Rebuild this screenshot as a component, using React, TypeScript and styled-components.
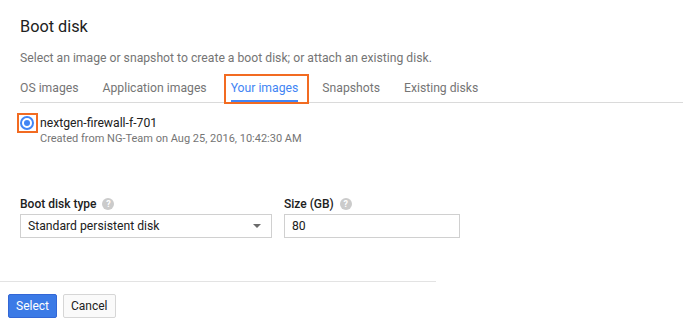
import React from 'react';
import styled, { createGlobalStyle } from 'styled-components';

const GlobalStyle = createGlobalStyle`
  html, body {
    margin: 0;
    padding: 0;
    background: #ffffff;
    font-family: Roboto, "Liberation Sans", Arial, sans-serif;
    color: #212121;
  }
`;

const Page = styled.div`
  width: 683px;
  height: 322px;
  overflow: hidden;
  display: flex;
  flex-direction: column;
`;

const Content = styled.div`
  padding: 16px 0 0 20px;
`;

const Title = styled.h2`
  margin: 0;
  font-size: 16.3px;
  font-weight: 400;
  line-height: 22px;
  color: #212121;
`;

const Subtitle = styled.p`
  margin: 12px 0 0;
  font-size: 12.2px;
  line-height: 16px;
  color: #757575;
`;

const TabBar = styled.div`
  display: flex;
  gap: 24px;
  margin-top: 7px;
  border-bottom: 1px solid #dadada;
`;

const Tab = styled.div<{ $active?: boolean; $marked?: boolean }>`
  position: relative;
  font-size: 12.2px;
  line-height: 16px;
  height: 30px;
  padding-top: 7px;
  box-sizing: border-box;
  color: ${p => (p.$active ? '#4285f4' : '#757575')};
  border-bottom: 3px solid ${p => (p.$active ? '#4285f4' : 'transparent')};
  margin-bottom: -1px;
  &::after {
    content: '';
    display: ${p => (p.$marked ? 'block' : 'none')};
    position: absolute;
    top: 1px;
    bottom: -4px;
    left: -7px;
    right: -11px;
    border: 2px solid #f26b21;
  }
`;

const ImageRow = styled.div`
  display: flex;
  align-items: flex-start;
  gap: 6px;
  margin-top: 12px;
`;

const Radio = styled.span`
  position: relative;
  flex: none;
  margin-top: 1px;
  width: 14px;
  height: 14px;
  box-sizing: border-box;
  border-radius: 50%;
  border: 2px solid #4285f4;
  display: flex;
  align-items: center;
  justify-content: center;
  &::before {
    content: '';
    width: 6px;
    height: 6px;
    border-radius: 50%;
    background: #4285f4;
  }
  &::after {
    content: '';
    position: absolute;
    top: -5px;
    left: -5px;
    width: 21px;
    height: 20px;
    box-sizing: border-box;
    border: 2px solid #f26b21;
  }
`;

const ImageText = styled.div`
  display: flex;
  flex-direction: column;
`;

const ImageName = styled.span`
  font-size: 12.2px;
  line-height: 16px;
  color: #212121;
`;

const ImageMeta = styled.span`
  font-size: 11px;
  line-height: 16px;
  color: #757575;
`;

const Fields = styled.div`
  display: flex;
  gap: 12px;
  margin-top: 50px;
`;

const Field = styled.div<{ $w: number }>`
  display: flex;
  flex-direction: column;
  gap: 3px;
  width: ${p => p.$w}px;
`;

const Label = styled.div`
  display: flex;
  align-items: center;
  gap: 6px;
  font-size: 12px;
  font-weight: 500;
  line-height: 14px;
  color: #212121;
`;

const Help = styled.span`
  width: 12px;
  height: 12px;
  border-radius: 50%;
  background: #cbcbcb;
  color: #fff;
  font-size: 9px;
  font-weight: 700;
  line-height: 12px;
  text-align: center;
`;

const Box = styled.div`
  height: 24px;
  box-sizing: border-box;
  border: 1px solid #d0d0d0;
  display: flex;
  align-items: center;
  justify-content: space-between;
  padding: 0 10px 0 7px;
  font-size: 12.2px;
  color: #212121;
`;

const Caret = styled.span`
  width: 0;
  height: 0;
  border-left: 4px solid transparent;
  border-right: 4px solid transparent;
  border-top: 4px solid #6b6b6b;
`;

const Footer = styled.div`
  margin-top: auto;
  padding-bottom: 4px;
`;

const Divider = styled.div`
  width: 436px;
  height: 1px;
  background: #e3e3e3;
`;

const Buttons = styled.div`
  display: flex;
  gap: 6px;
  padding: 12px 0 0 8px;
`;

const Button = styled.button<{ $primary?: boolean }>`
  height: 24px;
  padding: 0 7px;
  font-family: Roboto, "Liberation Sans", Arial, sans-serif;
  font-size: 12px;
  border-radius: 2px;
  border: 1px solid ${p => (p.$primary ? '#3367d6' : '#d6d6d6')};
  background: ${p => (p.$primary ? '#3b7ae6' : '#fafafa')};
  color: ${p => (p.$primary ? '#ffffff' : '#212121')};
`;

const tabs = ['OS images', 'Application images', 'Your images', 'Snapshots', 'Existing disks'];

const App: React.FC = () => {
  return (
    <Page>
      <GlobalStyle />
      <Content>
        <Title>Boot disk</Title>
        <Subtitle>Select an image or snapshot to create a boot disk; or attach an existing disk.</Subtitle>
        <TabBar>
          {tabs.map(t => (
            <Tab key={t} $active={t === 'Your images'} $marked={t === 'Your images'}>
              {t}
            </Tab>
          ))}
        </TabBar>
        <ImageRow>
          <Radio />
          <ImageText>
            <ImageName>nextgen-firewall-f-701</ImageName>
            <ImageMeta>Created from NG-Team on Aug 25, 2016, 10:42:30 AM</ImageMeta>
          </ImageText>
        </ImageRow>
        <Fields>
          <Field $w={252}>
            <Label>
              Boot disk type <Help>?</Help>
            </Label>
            <Box>
              Standard persistent disk
              <Caret />
            </Box>
          </Field>
          <Field $w={176}>
            <Label>
              Size (GB) <Help>?</Help>
            </Label>
            <Box>80</Box>
          </Field>
        </Fields>
      </Content>
      <Footer>
        <Divider />
        <Buttons>
          <Button $primary>Select</Button>
          <Button>Cancel</Button>
        </Buttons>
      </Footer>
    </Page>
  );
};

export default App;
